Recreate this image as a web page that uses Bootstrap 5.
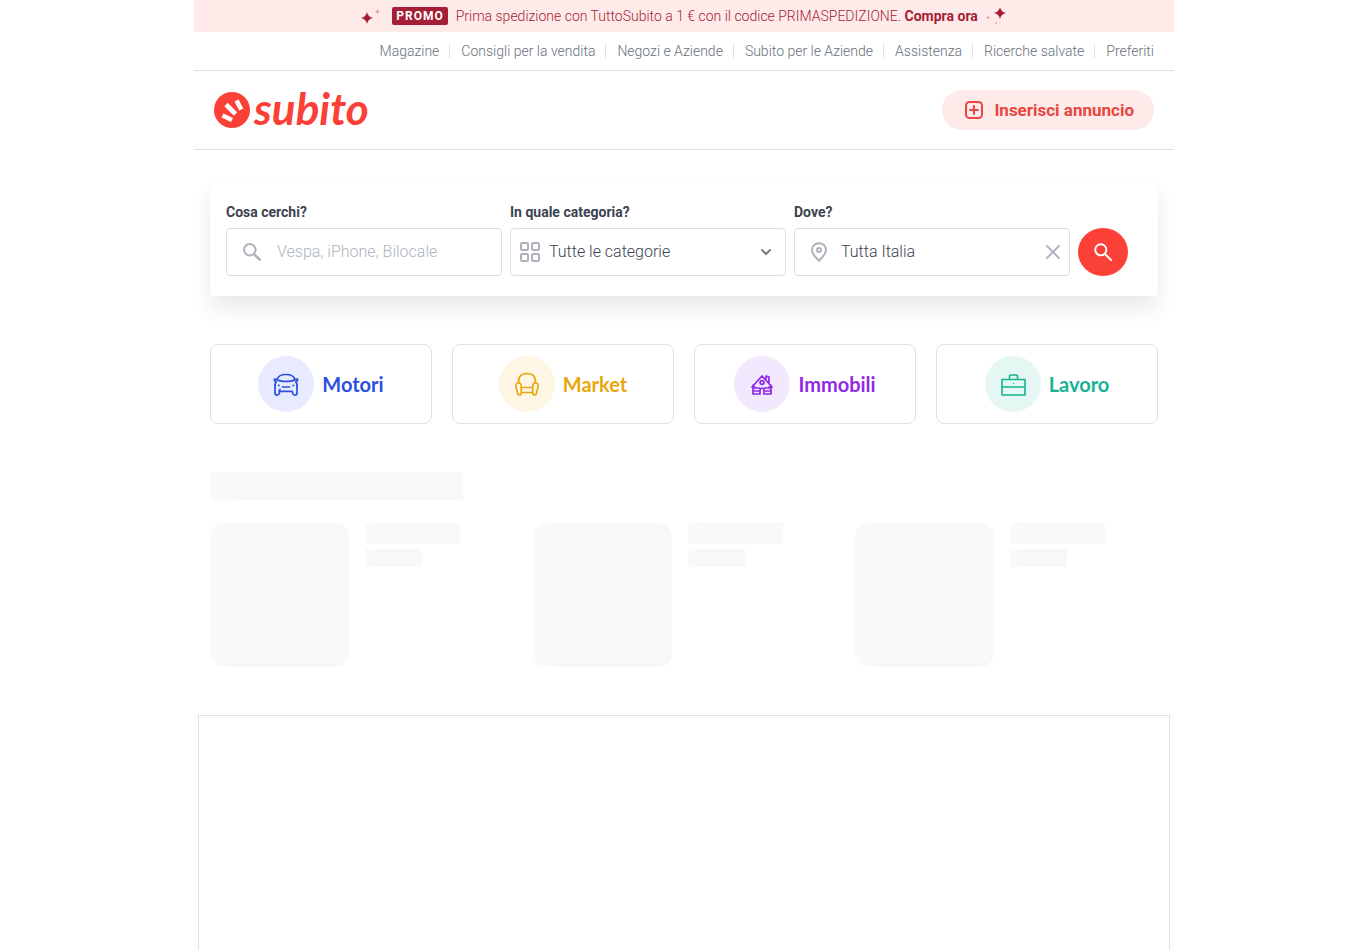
<!DOCTYPE html>
<html lang="it">
<head>
<meta charset="utf-8">
<meta name="viewport" content="width=device-width, initial-scale=1">
<title>Subito</title>
<link href="https://cdn.jsdelivr.net/npm/bootstrap@5.3.0/dist/css/bootstrap.min.css" rel="stylesheet">
<style>
  :root { --brand: #fb4137; --promo: #a51e35; --line: #dfe1e3; --ink: #3c4350; --muted-ink: #68717b; --tint: #fdeae9; --bold-face: Lato, Roboto, sans-serif; }
  body { font-family: Roboto, "Liberation Sans", sans-serif; color: var(--ink); background: #fff; font-size: 14px; line-height: 20px; }
  .page-shell { max-width: 980px; }
  .promo-bar { background: var(--tint); color: var(--promo); min-height: 32px; }
  .promo-bar a { color: var(--promo); }
  .promo-tag { background: var(--promo); color: #fff; font-size: 12px; line-height: 18px; letter-spacing: 1px; font-weight: 700; border-radius: 2px; padding: 0 4px; }
  .promo-text { font-weight: 300; }
  .top-links { min-height: 39px; border-bottom: 1px solid var(--line); }
  .top-links a { color: var(--muted-ink); font-weight: 300; }
  .top-links li + li::before { content: ""; width: 1px; height: 14px; background: var(--line); margin: 0 11px 0 10px; }
  .site-head { min-height: 79px; border-bottom: 1px solid var(--line); }
  .word-logo { font: italic 700 44px/36px Lato, sans-serif; color: var(--brand); padding-bottom: 4px; }
  .btn-post { background: var(--tint); color: #e8463f; height: 40px; font-weight: 700; font-size: 17px; line-height: 20px; border: 0; }
  .btn-post:hover { background: #fbdbd9; color: #e8463f; }
  .search-card { margin-top: 32px; padding: 20px 30px 20px 16px; border-radius: 4px; box-shadow: 0 12px 22px rgba(0,0,0,.09); }
  .search-card label { font-weight: 700; margin-bottom: 6px; }
  .field-box { height: 48px; border: 1px solid #dcdfe2; border-radius: 4px; color: #adb1ba; }
  .field-box input, .field-box select { border: 0; outline: 0; background: transparent; font-size: 16px; line-height: 24px; font-weight: 300; color: var(--ink); min-width: 0; padding: 0; appearance: none; }
  .field-box input::placeholder { color: #adb4bd; opacity: 1; }
  .btn-find { width: 50px; height: 48px; background: var(--brand); color: #fff; border: 0; }
  .btn-find:hover { background: #e2372e; color: #fff; }
  .category-grid { display: grid; grid-template-columns: repeat(4, 1fr); gap: 20px; margin-top: 48px; }
  .category-link { height: 80px; border: 1px solid var(--line); border-radius: 8px; font-family: var(--bold-face); font-size: 20px; line-height: 24px; font-weight: 700; }
  .icon-disc { width: 56px; height: 56px; }
  .c-motori { color: #2b50e0; } .c-motori .icon-disc { background: #e8ebff; }
  .c-market { color: #eaa60d; } .c-market .icon-disc { background: #fdf6e4; }
  .c-immobili { color: #9029e6; } .c-immobili .icon-disc { background: #f2e9ff; }
  .c-lavoro { color: #17b394; } .c-lavoro .icon-disc { background: #e4f7f2; }
  .stub { background: linear-gradient(90deg, #fafafb, #f8f8fa 20%); }
  .stub-title { width: 253px; height: 28px; margin-top: 48px; }
  .stub-grid { display: grid; grid-template-columns: repeat(3, 1fr); gap: 20px; margin-top: 23px; }
  .stub-pic { width: 139px; height: 144px; border-radius: 14px; }
  .stub-line { width: 95px; height: 21px; margin-bottom: 5px; }
  .stub-short { width: 57px; height: 18px; }
  .banner-slot { margin-top: 48px; border: 1px solid var(--line); min-height: 235px; }
</style>
</head>
<body>
<div class="page-shell mx-auto min-vh-100 d-flex flex-column">
  <div class="promo-bar d-flex align-items-center justify-content-center">
    <svg width="20" height="20" viewBox="0 0 20 20" fill="currentColor" aria-hidden="true" class="me-2"><path d="M7 6Q8 11 13 12Q8 13 7 18Q6 13 1 12Q6 11 7 6Z"/><path opacity=".35" d="M17.500 3Q18 5 20 5.500Q18 6 17.500 8Q17 6 15 5.500Q17 5 17.500 3Z"/></svg>
    <span class="promo-tag ms-1 me-2">PROMO</span>
    <span class="promo-text">Prima spedizione con TuttoSubito a 1 € con il codice PRIMASPEDIZIONE. <a href="#" class="fw-bold text-decoration-none">Compra ora</a></span>
    <svg width="22" height="20" viewBox="0 0 22 20" fill="currentColor" aria-hidden="true" class="ms-2"><path d="M14 1Q15 6 20 7Q15 8 14 13Q13 8 8 7Q13 6 14 1Z"/><path opacity=".35" d="M2 9.500Q2.300 11.200 4 11.500Q2.300 11.800 2 13.500Q1.700 11.800 0 11.500Q1.700 11.200 2 9.500Z"/><circle opacity=".3" cx="10" cy="17" r="1"/></svg>
  </div>
  <nav class="top-links d-flex justify-content-end align-items-center" aria-label="Servizi">
    <ul class="list-unstyled d-flex mb-0 me-3 pe-1">
      <li class="d-flex align-items-center"><a href="#" class="text-decoration-none">Magazine</a></li>
      <li class="d-flex align-items-center"><a href="#" class="text-decoration-none">Consigli per la vendita</a></li>
      <li class="d-flex align-items-center"><a href="#" class="text-decoration-none">Negozi e Aziende</a></li>
      <li class="d-flex align-items-center"><a href="#" class="text-decoration-none">Subito per le Aziende</a></li>
      <li class="d-flex align-items-center"><a href="#" class="text-decoration-none">Assistenza</a></li>
      <li class="d-flex align-items-center"><a href="#" class="text-decoration-none">Ricerche salvate</a></li>
      <li class="d-flex align-items-center"><a href="#" class="text-decoration-none">Preferiti</a></li>
    </ul>
  </nav>
  <header class="site-head d-flex align-items-center justify-content-between px-3">
    <a href="#" class="d-flex align-items-center gap-1 text-decoration-none ms-1">
      <svg width="36" height="36" viewBox="0 0 36 36" aria-hidden="true"><circle cx="18" cy="18" r="18" fill="#fb4137"/><g stroke="#fff" stroke-width="4.600"><path d="M8.500 23.500l9.500 4.500M12 12.500l9.500 9.500M22.500 8.500l4.800 9"/></g></svg>
      <span class="word-logo">subito</span>
    </a>
    <button type="button" class="btn btn-post rounded-pill d-flex align-items-center me-1">
      <svg class="ms-2 me-2" width="24" height="24" viewBox="0 0 24 24" fill="none" stroke="currentColor" stroke-width="2" aria-hidden="true"><rect x="4" y="4" width="16" height="16" rx="3.500"/><path d="M12 8v8M8 12h8" stroke-linecap="round"/></svg>
      <span class="me-2">Inserisci annuncio</span>
    </button>
  </header>
  <main class="d-flex flex-column flex-grow-1">
    <div class="px-3">
      <form class="search-card d-flex align-items-end gap-2" onsubmit="return false">
        <div class="flex-fill w-100">
          <label for="what" class="d-block">Cosa cerchi?</label>
          <div class="field-box d-flex align-items-center">
            <svg class="ms-3 me-3 flex-shrink-0" width="18" height="18" viewBox="0 0 18 18" fill="none" stroke="currentColor" stroke-width="2" aria-hidden="true"><circle cx="6.800" cy="6.800" r="5.800"/><path d="M11 11l6.500 6.500" stroke-width="2.400"/></svg>
            <input id="what" type="text" class="flex-grow-1" placeholder="Vespa, iPhone, Bilocale">
          </div>
        </div>
        <div class="flex-fill w-100">
          <label for="cat" class="d-block">In quale categoria?</label>
          <div class="field-box d-flex align-items-center px-2">
            <svg class="me-2 flex-shrink-0" width="22" height="22" viewBox="0 0 22 22" fill="none" stroke="currentColor" stroke-width="2" aria-hidden="true"><rect x="2" y="2" width="7" height="7" rx="1.200"/><rect x="13" y="2" width="7" height="7" rx="1.200"/><rect x="2" y="13" width="7" height="7" rx="1.200"/><rect x="13" y="13" width="7" height="7" rx="1.200"/></svg>
            <select id="cat" class="flex-grow-1"><option>Tutte le categorie</option></select>
            <svg class="me-1 flex-shrink-0" width="14" height="12" viewBox="0 0 14 12" fill="none" stroke="#767d87" stroke-width="2" stroke-linecap="round" aria-hidden="true"><path d="M3 4l4 4 4-4"/></svg>
          </div>
        </div>
        <div class="flex-fill w-100">
          <label for="where" class="d-block">Dove?</label>
          <div class="field-box d-flex align-items-center">
            <svg class="ms-3 me-2 flex-shrink-0" width="18" height="20" viewBox="0 0 18 20" fill="none" stroke="currentColor" stroke-width="2" aria-hidden="true"><path d="M8 1.200c4 0 7 2.900 7 6.800 0 4.300-4 7.500-7 10.800C5 15.500 1 12.300 1 8c0-3.900 3-6.800 7-6.800z"/><circle cx="8" cy="8" r="2"/></svg>
            <input id="where" type="text" class="flex-grow-1 ms-1" value="Tutta Italia">
            <button type="button" class="btn p-0 border-0 me-2 d-flex" aria-label="Cancella"><svg width="16" height="16" viewBox="0 0 16 16" fill="none" stroke="#adb1ba" stroke-width="1.800" stroke-linecap="round"><path d="M2 2l12 12M14 2L2 14"/></svg></button>
          </div>
        </div>
        <button type="submit" class="btn btn-find rounded-circle p-0 flex-shrink-0 d-flex align-items-center justify-content-center" aria-label="Cerca">
          <svg width="18" height="18" viewBox="0 0 18 18" fill="none" stroke="currentColor" stroke-width="1.900" aria-hidden="true"><circle cx="6.800" cy="6.800" r="5.600"/><path d="M11 11l6 6" stroke-linecap="round"/></svg>
        </button>
      </form>
      <div class="category-grid">
        <a href="#" class="category-link c-motori d-flex align-items-center justify-content-center gap-2 text-decoration-none"><span class="icon-disc rounded-circle d-flex align-items-center justify-content-center"><svg width="28" height="28" viewBox="0 0 28 28" fill="none" stroke="currentColor" stroke-width="1.700" stroke-linecap="round" stroke-linejoin="round" aria-hidden="true"><path d="M5 9.500C6 6 8.500 4.500 14 4.500S22 6 23 9.500c-3 2.600-15 2.600-18 0zM5 9.500l-2.500-.5c-.5 1.500.5 2.500 1.800 2.600M23 9.500l2.500-.5c.5 1.500-.5 2.500-1.800 2.600M4.300 11.600C3 13 2.700 15 3 18v5c0 2.700 4 2.700 4.300 0l.5-1.700h12.400l.5 1.700c.3 2.700 4.300 2.700 4.300 0v-5c.3-3 0-5-1.300-6.400M10.500 17h7M6.500 15.300l.5.300M21.500 15.300l-.5.300M7 21l1-1.500"/></svg></span>Motori</a>
        <a href="#" class="category-link c-market d-flex align-items-center justify-content-center gap-2 text-decoration-none"><span class="icon-disc rounded-circle d-flex align-items-center justify-content-center"><svg width="28" height="28" viewBox="0 0 28 28" fill="none" stroke="currentColor" stroke-width="1.700" stroke-linecap="round" stroke-linejoin="round" aria-hidden="true"><path d="M5.500 13C5 7 8 3.500 14 3.500S23 7 22.500 13M8.200 16.500c.2-2.800-1.200-3.700-3-3.500-2 .2-2.700 2-2.400 3.700.3 2 1.400 3.300 1.500 5 .1 2.500.5 3.300 2 3.300s2-.8 2-2.500zM19.800 16.500c-.2-2.800 1.200-3.700 3-3.500 2 .2 2.700 2 2.400 3.700-.3 2-1.400 3.300-1.500 5-.1 2.500-.5 3.300-2 3.300s-2-.8-2-2.500zM8.300 17.500h11.400M8.300 22.500h11.400"/></svg></span>Market</a>
        <a href="#" class="category-link c-immobili d-flex align-items-center justify-content-center gap-2 text-decoration-none"><span class="icon-disc rounded-circle d-flex align-items-center justify-content-center"><svg width="28" height="28" viewBox="0 0 28 28" fill="none" stroke="currentColor" stroke-width="1.700" stroke-linecap="round" stroke-linejoin="round" aria-hidden="true"><path d="M4 17L14 6l10 11M5 15v9h7V20.500c0-3 4-3 4 0V24h7v-9M5 18h6.500M5 21h7M16.500 18H23M16 21h7M18 9V6l3 1v6M4 17h3M21 17h3"/><circle cx="14" cy="12.500" r="1.900"/></svg></span>Immobili</a>
        <a href="#" class="category-link c-lavoro d-flex align-items-center justify-content-center gap-2 text-decoration-none"><span class="icon-disc rounded-circle d-flex align-items-center justify-content-center"><svg width="28" height="28" viewBox="0 0 28 28" fill="none" stroke="currentColor" stroke-width="1.600" stroke-linejoin="round" aria-hidden="true"><path d="M3 9.500h23v15.500H3zM3 17h23M10.500 9.500V6.200c0-.8.400-1.200 1.200-1.200h5.600c.8 0 1.200.4 1.200 1.200v3.300"/><circle cx="14.500" cy="13.500" r=".3" stroke-width="1"/></svg></span>Lavoro</a>
      </div>
      <div class="stub stub-title"></div>
      <div class="stub-grid">
        <div class="d-flex gap-3"><div class="stub stub-pic"></div><div><div class="stub stub-line"></div><div class="stub stub-short"></div></div></div>
        <div class="d-flex gap-3"><div class="stub stub-pic"></div><div><div class="stub stub-line"></div><div class="stub stub-short"></div></div></div>
        <div class="d-flex gap-3"><div class="stub stub-pic"></div><div><div class="stub stub-line"></div><div class="stub stub-short"></div></div></div>
      </div>
    </div>
    <div class="banner-slot mx-1 flex-grow-1 border-bottom-0"></div>
  </main>
</div>
<script src="https://cdn.jsdelivr.net/npm/bootstrap@5.3.0/dist/js/bootstrap.bundle.min.js"></script>
</body>
</html>
